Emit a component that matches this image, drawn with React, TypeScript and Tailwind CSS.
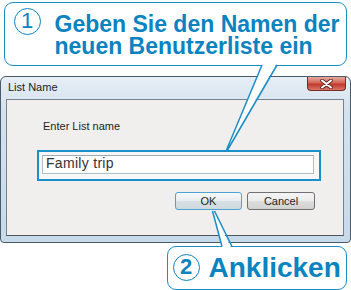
import React from "react";

const blue = "#1a8fc6";

function CloseButton() {
  return (
    <div className="flex h-[14px] w-[39px] items-center justify-center rounded-b-[4px] border border-t-0 border-[#7a2b24] bg-[linear-gradient(to_bottom,#e8a99f_0%,#d3665a_45%,#c0392c_55%,#d9766a_100%)]">
      <svg width="13" height="10" viewBox="0 0 13 10">
        <path d="M2 1.5 L11 8.5 M11 1.5 L2 8.5" stroke="#5a2320" strokeWidth="3.6" strokeLinecap="round" />
        <path d="M2 1.5 L11 8.5 M11 1.5 L2 8.5" stroke="#ffffff" strokeWidth="2" strokeLinecap="round" />
      </svg>
    </div>
  );
}

function Dialog() {
  return (
    <div className="mt-[76px] h-[167px] w-[351px] rounded-t-[6px] rounded-b-[4px] border border-[#4b5a68] bg-[linear-gradient(to_bottom,#e6eef6_0%,#d4e2ef_20%,#c7dae9_100%)]">
      <div className="flex h-[22px] items-start justify-between pr-[4px]">
        <div className="pl-[7px] pt-[4px] text-[11px] leading-[13px] text-[#1b1b1b]">List Name</div>
        <CloseButton />
      </div>
      <div className="ml-[5px] h-[137px] w-[338px] border border-[#77828d] border-b-[#4f555b] bg-[#f0efed]">
        <div className="pl-[36px] pt-[20px] text-[11px] leading-[13px] text-[#1e1e1e]">Enter List name</div>
        <div className="ml-[30px] mt-[17px] h-[31px] w-[284px] border-2 border-[#1a90c8] bg-[#f7f7f7] pl-[3px] pt-[3px]">
          <div className="h-[19px] w-[272px] border border-[#aebfcc] border-t-[#9aa9b6] bg-white pl-[3px] text-[14px] leading-[15px] tracking-[0.3px] text-[#333333]">
            Family trip
          </div>
        </div>
        <div className="ml-[168px] mt-[11px] flex gap-[5px]">
          <button className="h-[18px] w-[67px] rounded-[3px] border border-[#4fa3d2] bg-[linear-gradient(to_bottom,#f6f9fb_0%,#e9eef1_50%,#d6dfe4_51%,#cfd9df_100%)] text-[11px] leading-[16px] text-[#1e1e1e]">
            OK
          </button>
          <button className="h-[18px] w-[68px] rounded-[3px] border border-[#707070] bg-[linear-gradient(to_bottom,#f4f4f4_0%,#ececec_50%,#dddddd_51%,#d2d2d2_100%)] text-[11px] leading-[16px] text-[#1e1e1e]">
            Cancel
          </button>
        </div>
      </div>
    </div>
  );
}

export default function App() {
  return (
    <div className="relative h-[290px] w-[351px] overflow-hidden bg-white font-['Liberation_Sans',Arial,sans-serif]">
      <Dialog />

      <div className="absolute left-[4px] top-[2px] flex h-[64px] w-[343px] rounded-[9px] border-[1.5px] border-[#1a8fc6] bg-white pl-[8.5px]">
        <div className="mt-[4.5px] flex h-[27px] w-[27px] items-center justify-center rounded-full border-[1.5px] border-[#0b83bf] text-[22px] leading-none text-[#0b83bf]">
          1
        </div>
        <div className="ml-[14px] mt-[9.5px] text-[23px] font-bold leading-[22px] text-[#0b83bf]">
          <div>Geben Sie den Namen der</div>
          <div>neuen Benutzerliste ein</div>
        </div>
      </div>

      <div className="absolute left-[167px] top-[246px] flex h-[44px] w-[180px] rounded-[9px] border-[1.5px] border-[#1a8fc6] bg-white pl-[4.5px]">
        <div className="mt-[6.5px] flex h-[27px] w-[27px] items-center justify-center rounded-full border-[1.5px] border-[#0b83bf] text-[22px] font-bold leading-none text-[#0b83bf]">
          2
        </div>
        <div className="ml-[9px] mt-[6.8px] text-[28px] font-bold leading-[28px] text-[#0b83bf]">Anklicken</div>
      </div>

      <svg className="pointer-events-none absolute left-0 top-0" width="351" height="290" viewBox="0 0 351 290">
        <polygon points="262.5,63.5 276.5,63.5 227,149" fill="#ffffff" />
        <path d="M262 65 L226.5 150 M277 65 L227.5 150" stroke={blue} strokeWidth="1.5" fill="none" />
        <polygon points="213.5,212 222.5,248.5 231.5,248.5" fill="#ffffff" />
        <path d="M212.5 211 L222 246.5 M214.5 211 L232 246.5" stroke={blue} strokeWidth="1.5" fill="none" />
      </svg>
    </div>
  );
}
